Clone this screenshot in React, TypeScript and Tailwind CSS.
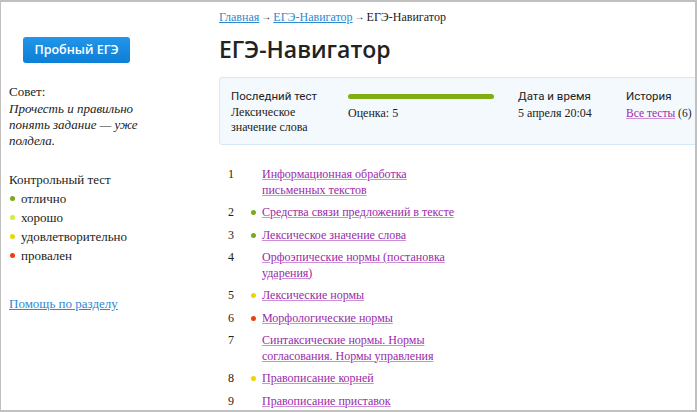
import React from 'react';

const serif = { fontFamily: '"Liberation Serif", "DejaVu Serif", serif' };
const sans = { fontFamily: 'Roboto, "Open Sans", sans-serif' };

type Topic = {
  num: number;
  lines: string[];
  dot?: string;
};

const topics: Topic[] = [
  { num: 1, lines: ['Информационная обработка', 'письменных текстов'] },
  { num: 2, lines: ['Средства связи предложений в тексте'], dot: 'bg-[#7aa81a]' },
  { num: 3, lines: ['Лексическое значение слова'], dot: 'bg-[#7aa81a]' },
  { num: 4, lines: ['Орфоэпические нормы (постановка', 'ударения)'] },
  { num: 5, lines: ['Лексические нормы'], dot: 'bg-[#e9d700]' },
  { num: 6, lines: ['Морфологические нормы'], dot: 'bg-[#f03c12]' },
  { num: 7, lines: ['Синтаксические нормы. Нормы', 'согласования. Нормы управления'] },
  { num: 8, lines: ['Правописание корней'], dot: 'bg-[#e9d700]' },
  { num: 9, lines: ['Правописание приставок'] },
];

const legend = [
  { label: 'отлично', color: 'bg-[#7aa81a]' },
  { label: 'хорошо', color: 'bg-[#c9f03c]' },
  { label: 'удовлетворительно', color: 'bg-[#e9d700]' },
  { label: 'провален', color: 'bg-[#f03c12]' },
];

export default function App() {
  return (
    <div className="w-[697px] h-[412px] overflow-hidden border-t-2 border-r-2 border-b-2 border-l border-[#c0c0c0] bg-white text-[#222]" style={serif}>
      <div className="flex h-full">
        {/* Sidebar */}
        <aside className="w-[218px] shrink-0 pl-[8px]">
          <button
            className="mt-[35px] ml-[14px] w-[107px] h-[26px] rounded-[3px] bg-gradient-to-b from-[#2196ea] to-[#0c7fd6] text-white text-[12.5px] font-semibold"
            style={{ fontFamily: '"Open Sans", "DejaVu Sans", sans-serif' }}
          >
            Пробный ЕГЭ
          </button>

          {/* Tip */}
          <div className="mt-[20px] text-[13px] leading-[16px]">
            <div className="leading-[18px]">Совет:</div>
            <div className="italic w-[135px]">Прочесть и правильно понять задание — уже полдела.</div>
          </div>

          {/* Legend */}
          <div className="mt-[21px] text-[13px] leading-[19px]">
            <div>Контрольный тест</div>
            {legend.map(item => (
              <div key={item.label} className="flex items-center">
                <span className={`w-[5px] h-[5px] rounded-full ${item.color} ml-[1px] mr-[6px]`}></span>
                <span>{item.label}</span>
              </div>
            ))}
          </div>

          <a href="#" className="block mt-[31px] text-[13px] leading-[16px] text-[#2b8ad2] underline">
            Помощь по разделу
          </a>
        </aside>

        {/* Main */}
        <main className="flex-1 min-w-0 pt-[7px]">
          <div className="flex items-center text-[12px] leading-[16px]">
            <a href="#" className="text-[#2b8ad2] underline">Главная</a>
            <span className="mx-[2px] text-[10px]">→</span>
            <a href="#" className="text-[#2b8ad2] underline">ЕГЭ-Навигатор</a>
            <span className="mx-[2px] text-[10px]">→</span>
            <span>ЕГЭ-Навигатор</span>
          </div>

          <h1
            className="mt-[9px] text-[23px] leading-[30px] font-semibold text-[#222]"
            style={{ fontFamily: '"Open Sans", "DejaVu Sans", sans-serif' }}
          >
            ЕГЭ-Навигатор
          </h1>

          {/* Last test card */}
          <div className="mt-[13px] w-[500px] rounded-[3px] border border-[#d5e8f5] bg-[#f3f9fd] pt-[10px] pb-[9px] pl-[11px] flex text-[12px] leading-[16px]">
            <div className="w-[117px]">
              <div style={sans} className="text-[11.5px]">Последний тест</div>
              <div className="mt-[1px] leading-[15px]">Лексическое<br />значение слова</div>
            </div>
            <div className="w-[170px]">
              <div className="h-[16px] flex items-center">
                <div className="w-[146px] h-[5px] rounded-full bg-[#7fae14]"></div>
              </div>
              <div className="mt-[1px]">Оценка: 5</div>
            </div>
            <div className="w-[108px]">
              <div style={sans} className="text-[11.5px]">Дата и время</div>
              <div className="mt-[1px]">5 апреля 20:04</div>
            </div>
            <div>
              <div style={sans} className="text-[11.5px]">История</div>
              <div className="mt-[1px] text-[11.5px]">
                <a href="#" className="text-[#9a2aaa] underline decoration-[#cf8fd8]">Все тесты</a> (6)
              </div>
            </div>
          </div>

          {/* Topics */}
          <ul className="mt-[22px] pl-[9px] text-[12px] leading-[15.5px]">
            {topics.map(t => (
              <li key={t.num} className="flex mb-[7px]">
                <span className="w-[23px] shrink-0">{t.num}</span>
                <span className="w-[11px] shrink-0 h-[15.5px] flex items-center">
                  {t.dot && <span className={`w-[5px] h-[5px] rounded-full ${t.dot}`}></span>}
                </span>
                <a href="#" className="text-[#9a2aaa] underline decoration-[#cf8fd8]">
                  {t.lines.map((l, i) => (
                    <div key={i}>{l}</div>
                  ))}
                </a>
              </li>
            ))}
          </ul>
        </main>
      </div>
    </div>
  );
}
